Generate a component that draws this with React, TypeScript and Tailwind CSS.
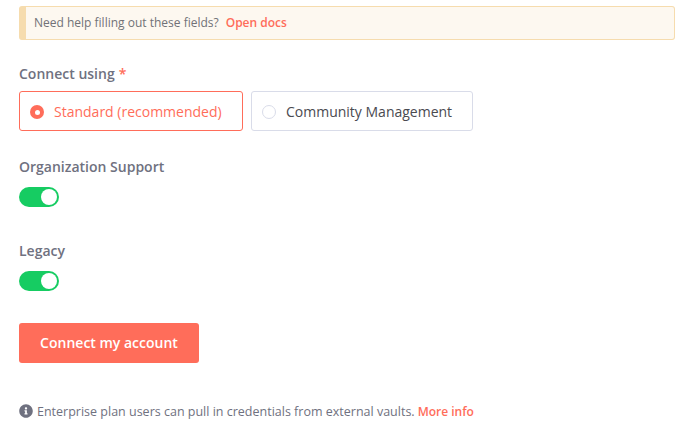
export default function App() {
  const toggle = (
    <div className="flex h-5 w-10 items-center justify-end rounded-full bg-[#16cc62] pr-0.5">
      <div className="h-4 w-4 rounded-full bg-white" />
    </div>
  );

  return (
    <div className="flex min-h-[424px] flex-col bg-white px-[19px] pt-1.5 font-['Open_Sans',sans-serif]">
      {/* Help banner */}
      <div className="flex h-[34px] w-[656px] items-center rounded-[3px] border border-l-[7px] border-[#f6dcae] bg-[#fdf8f0] pl-2 text-xs text-[#717277]">
        <span>Need help filling out these fields?</span>
        <span className="ml-[7px] font-semibold text-[#ff6d5a]">Open docs</span>
      </div>

      <div className="mt-[24px] text-sm leading-[20px] font-semibold text-[#6f7180]">
        Connect using <span className="ml-[0.5px] text-[#ff6d5a]">*</span>
      </div>
      <div className="mt-[7px] flex gap-2">
        <div className="flex h-10 w-[224px] items-center rounded-[3px] border border-[#ff6d5a] pt-0.5 pl-2.5 text-sm text-[#ff6d5a]">
          <span className="flex h-3.5 w-3.5 items-center justify-center rounded-full bg-[#ff6d5a]">
            <span className="h-[5px] w-[5px] rounded-full bg-white" />
          </span>
          <span className="ml-[10px]">Standard (recommended)</span>
        </div>
        <div className="flex h-10 w-[222px] items-center rounded-[3px] border border-[#d9dce9] pt-0.5 pl-2.5 text-sm text-[#4a4a50]">
          <span className="h-3.5 w-3.5 rounded-full border border-[#d9dce9]" />
          <span className="ml-[10px]">Community Management</span>
        </div>
      </div>

      <div className="mt-[26px] text-sm leading-[20px] font-semibold text-[#6f7180]">Organization Support</div>
      <div className="mt-2.5">{toggle}</div>

      <div className="mt-[34px] text-sm leading-[20px] font-semibold text-[#6f7180]">Legacy</div>
      <div className="mt-2.5">{toggle}</div>

      <button className="mt-[32px] h-10 w-[180px] rounded-[3px] bg-[#ff6d5a] text-sm font-semibold text-white">
        Connect my account
      </button>

      <div className="mt-[40px] flex items-center text-[12.5px] text-[#6f7180]">
        <svg className="h-3.5 w-3.5 -translate-y-px" viewBox="0 0 512 512" fill="#6f7180">
          <path d="M256 8C119 8 8 119 8 256s111 248 248 248 248-111 248-248S393 8 256 8zm0 110c23 0 42 19 42 42s-19 42-42 42-42-19-42-42 19-42 42-42zm56 254c0 7-5 12-12 12h-88c-7 0-12-5-12-12v-24c0-7 5-12 12-12h12v-64h-12c-7 0-12-5-12-12v-24c0-7 5-12 12-12h64c7 0 12 5 12 12v100h12c7 0 12 5 12 12v24z" />
        </svg>
        <span className="ml-[4px] font-medium">Enterprise plan users can pull in credentials from external vaults.</span>
        <span className="ml-[3px] text-xs font-semibold text-[#ff6d5a]">More info</span>
      </div>
    </div>
  );
}
